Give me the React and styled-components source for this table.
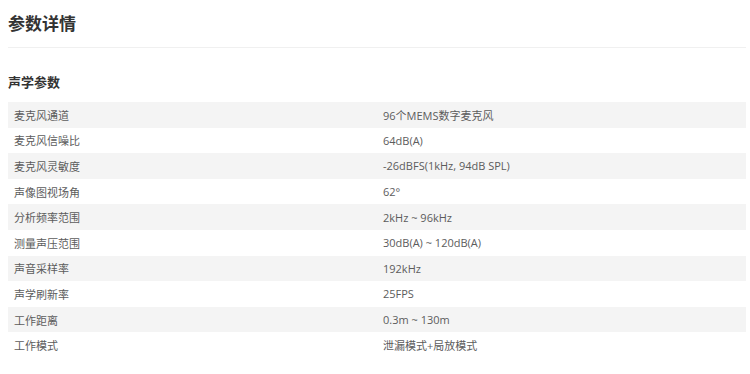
import React from "react";
import styled, { createGlobalStyle } from "styled-components";

const GlobalStyle = createGlobalStyle`
  body {
    margin: 0;
    background: #fff;
    font-family: "Noto Sans CJK SC", "Noto Sans", sans-serif;
  }
`;

const Page = styled.div`
  width: 738px;
  margin-left: 8px;
`;

const Header = styled.h2`
  margin: 0;
  height: 47px;
  line-height: 46px;
  font-size: 17px;
  font-weight: bold;
  color: #333;
  border-bottom: 1px solid #f0f0f0;
`;

const SectionTitle = styled.h3`
  margin: 0;
  padding-top: 24px;
  height: 30px;
  line-height: 20px;
  font-size: 13px;
  font-weight: bold;
  color: #333;
`;

const Table = styled.div`
  display: flex;
  flex-direction: column;
`;

const Row = styled.div`
  display: grid;
  grid-template-columns: 369px 369px;
  height: 25.6px;
  align-items: center;
  background: ${(p) => (p.$striped ? "#f4f4f4" : "transparent")};
  font-family: "Open Sans", "Noto Sans CJK SC", sans-serif;
  font-size: 11px;
  color: #5c5c5c;
`;

const Cell = styled.div`
  padding-left: 6px;
  white-space: pre;
`;

const params = [
  ["麦克风通道", "96个MEMS数字麦克风"],
  ["麦克风信噪比", "64dB(A)"],
  ["麦克风灵敏度", "-26dBFS(1kHz, 94dB SPL)"],
  ["声像图视场角", "62°"],
  ["分析频率范围", "2kHz ~ 96kHz"],
  ["测量声压范围", "30dB(A) ~ 120dB(A)"],
  ["声音采样率", "192kHz"],
  ["声学刷新率", "25FPS"],
  ["工作距离", "0.3m ~ 130m"],
  ["工作模式", "泄漏模式+局放模式"],
];

export default function App() {
  return (
    <Page>
      <GlobalStyle />
      <Header>参数详情</Header>
      <SectionTitle>声学参数</SectionTitle>
      <Table>
        {params.map(([name, value], i) => (
          <Row key={name} $striped={i % 2 === 0}>
            <Cell>{name}</Cell>
            <Cell>{value}</Cell>
          </Row>
        ))}
      </Table>
    </Page>
  );
}
